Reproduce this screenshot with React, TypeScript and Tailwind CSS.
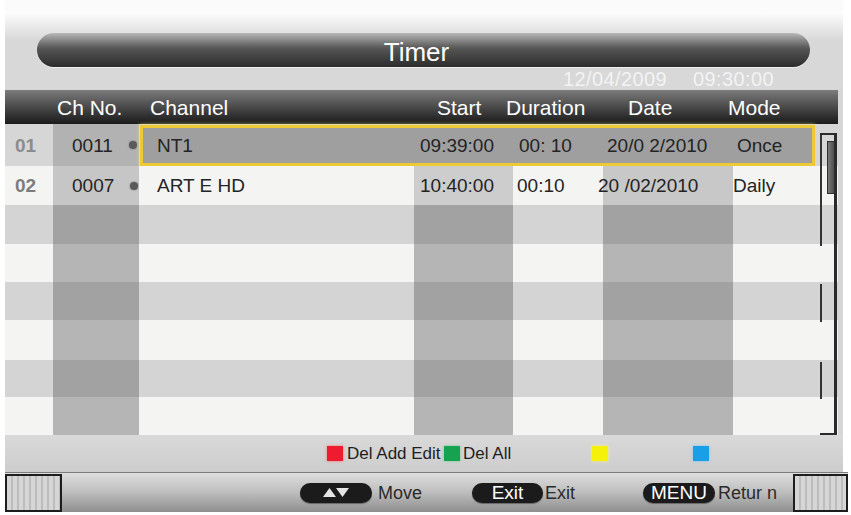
import React from 'react';

type EmptyRow = { h: string; dark: boolean };

const emptyRows: EmptyRow[] = [
  { h: 'h-[39px]', dark: true },
  { h: 'h-[38px]', dark: false },
  { h: 'h-[38px]', dark: true },
  { h: 'h-[40px]', dark: false },
  { h: 'h-[37px]', dark: true },
  { h: 'h-[38px]', dark: false },
];

const Dot = () => <span className="ml-[16px] h-[8px] w-[8px] rounded-full bg-[#5a5a5a] shadow-[0_0_2px_#777]" />;

const Pill = ({ w, children }: { w: string; children: React.ReactNode }) => (
  <div className={`${w} flex h-[20px] items-center justify-center rounded-full bg-[#1b1b1b] text-[19px] leading-none text-white shadow-[0_1px_1px_#666]`}>
    {children}
  </div>
);

const GrilleBox = ({ w }: { w: string }) => (
  <div
    className={`${w} h-[38px] shrink-0 border-2 border-[#1d1d1d] bg-[image:repeating-linear-gradient(90deg,#d6d6d6_0px,#d6d6d6_4px,#bcbcbc_4px,#bcbcbc_6px)]`}
  />
);

const BlankRow = ({ h, dark }: EmptyRow) => {
  const base = dark ? 'bg-[#d4d4d4]' : 'bg-[#f4f4f3]';
  const col = dark ? 'bg-[#a2a2a2]' : 'bg-[#b5b5b5]';
  return (
    <div className={`flex ${h}`}>
      <div className={`w-[48px] ${base}`} />
      <div className={`w-[86px] ${col}`} />
      <div className={`w-[275px] ${base}`} />
      <div className={`w-[99px] ${col}`} />
      <div className={`w-[90px] ${base}`} />
      <div className={`w-[130px] ${col}`} />
      <div className={`w-[82px] ${base}`} />
      <div className={`w-[23px] ${base}`} />
    </div>
  );
};

export default function App() {
  return (
    <div className="h-[515px] w-[851px] overflow-hidden bg-white font-['Liberation_Sans',Arial,sans-serif] select-none">
      <div className="ml-[5px] w-[838px] bg-[#d6d6d6]">
        {/* title area */}
        <div className="h-[90px] bg-gradient-to-b from-[#fbfbfb] from-[15%] to-[#d8d8d8] to-[45%] pt-[33px]">
          <div className="ml-[32px] flex h-[34px] w-[773px] items-center justify-center rounded-full bg-gradient-to-b from-[#b8b8b8] via-[#565656] via-[45%] to-[#2c2c2c] shadow-[0_1px_0_#efefef]">
            <span className="translate-y-[2px] pr-[14px] text-[26px] leading-none text-white">Timer</span>
          </div>
          <div className="flex h-[23px] items-center text-[20px] leading-none tracking-[0.4px] text-[#f3f3f3]">
            <span className="ml-[558px] w-[130px]">12/04/2009</span>
            <span>09:30:00</span>
          </div>
        </div>

        {/* column header */}
        <div className="flex h-[34px] w-[833px] items-center bg-gradient-to-b from-[#7c7c7c] via-[#4a4a4a] to-[#1b1b1b] text-[21px] leading-none text-white">
          <span className="w-[52px]" />
          <span className="w-[93px]">Ch No.</span>
          <span className="w-[287px]">Channel</span>
          <span className="w-[69px]">Start</span>
          <span className="w-[122px]">Duration</span>
          <span className="w-[100px]">Date</span>
          <span>Mode</span>
        </div>

        {/* rows */}
        <div className="relative w-[833px] text-[19px] leading-none text-[#242424]">
          <div className="flex h-[42px]">
            <div className="flex w-[48px] items-center bg-[#d6d6d6] pl-[10px] font-bold text-[#8c8c8c]">01</div>
            <div className="flex w-[86px] items-center bg-[#b2b2b2] pl-[19px]">
              <span>0011</span>
              <Dot />
            </div>
            <div className="w-[676px] bg-[#d6d6d6] pt-[1px] pl-[1px]">
              <div className="flex h-full items-center border-[3px] border-[#ecc935] bg-[#9f9f9f] shadow-[0_0_4px_#f3e27a]">
                <span className="w-[270px] pl-[14px]">NT1</span>
                <span className="w-[99px] pl-[7px]">09:39:00</span>
                <span className="w-[90px] pl-[7px]">00: 10</span>
                <span className="w-[130px] pl-[5px]">20/0 2/2010</span>
                <span className="w-[80px] pl-[5px]">Once</span>
              </div>
            </div>
            <div className="w-[23px] bg-[#d6d6d6]" />
          </div>

          <div className="flex h-[39px]">
            <div className="flex w-[48px] items-center bg-[#f4f4f3] pl-[10px] font-bold text-[#7c7c7c]">02</div>
            <div className="flex w-[86px] items-center bg-[#c6c6c6] pl-[19px]">
              <span>0007</span>
              <Dot />
            </div>
            <div className="flex w-[275px] items-center bg-[#f4f4f3] pl-[18px]">ART E HD</div>
            <div className="flex w-[99px] items-center bg-[#cdcdcd] pl-[6px]">10:40:00</div>
            <div className="flex w-[90px] items-center bg-[#f4f4f3] pl-[4px]">00:10</div>
            <div className="flex w-[130px] items-center bg-[#c8c8c8]">
              <span className="-ml-[5px]">20 /02/2010</span>
            </div>
            <div className="flex w-[82px] items-center bg-[#f4f4f3]">Daily</div>
            <div className="w-[23px] bg-[#f4f4f3]" />
          </div>

          {emptyRows.map((r, i) => (
            <BlankRow key={i} h={r.h} dark={r.dark} />
          ))}

          {/* scrollbar */}
          <div className="absolute top-[9px] left-[815px] h-[302px] w-[17px] border-t-2 border-r-[3px] border-b-2 border-[#2a2a2a]">
            <div className="absolute top-0 left-0 h-[111px] w-[2px] bg-[#333]" />
            <div className="absolute top-[149px] left-0 h-[38px] w-[2px] bg-[#333]" />
            <div className="absolute top-[227px] left-0 h-[37px] w-[2px] bg-[#333]" />
            <div className="absolute top-[6px] left-[7px] h-[53px] w-[8px] border border-[#2e2e2e] bg-gradient-to-r from-[#7a7a7a] to-[#4e4e4e]" />
          </div>
        </div>

        {/* colour keys */}
        <div className="flex h-[37px] items-center bg-gradient-to-b from-[#d9d9d9] to-[#cdcdcd] text-[17px] leading-none text-[#1e1e1e]">
          <span className="ml-[322px] h-[15px] w-[16px] bg-[#ee1c2e] shadow-[0_0_3px_#f27a84]" />
          <span className="w-[101px] pl-[4px]">Del Add Edit</span>
          <span className="h-[15px] w-[16px] bg-[#16a34f] shadow-[0_0_3px_#7fc99b]" />
          <span className="w-[132px] pl-[3px]">Del All</span>
          <span className="h-[15px] w-[16px] bg-[#f6f10a] shadow-[0_0_3px_#f7f38a]" />
          <span className="w-[85px]" />
          <span className="h-[15px] w-[16px] bg-[#1a9fe6] shadow-[0_0_3px_#86c8ee]" />
        </div>
      </div>

      {/* bottom help bar */}
      <div className="ml-[5px] flex h-[40px] w-[843px] items-center border-t border-[#7c7c7c] bg-gradient-to-b from-[#dedede] via-[#bdbdbd] to-[#8f8f8f] text-[18px] leading-none text-[#2a2a2a]">
        <GrilleBox w="w-[57px]" />
        <div className="ml-[238px]">
          <Pill w="w-[72px]">
            <svg width="26" height="9" viewBox="0 0 26 9">
              <polygon points="0,9 6.5,0 13,9" fill="#e4e4e4" />
              <polygon points="13,0 26,0 19.5,9" fill="#e4e4e4" />
            </svg>
          </Pill>
        </div>
        <span className="w-[100px] pl-[6px]">Move</span>
        <Pill w="w-[71px]">Exit</Pill>
        <span className="w-[100px] pl-[2px]">Exit</span>
        <Pill w="w-[72px]">MENU</Pill>
        <span className="w-[78px] pl-[3px]">Retur n</span>
        <GrilleBox w="w-[55px]" />
      </div>
    </div>
  );
}
